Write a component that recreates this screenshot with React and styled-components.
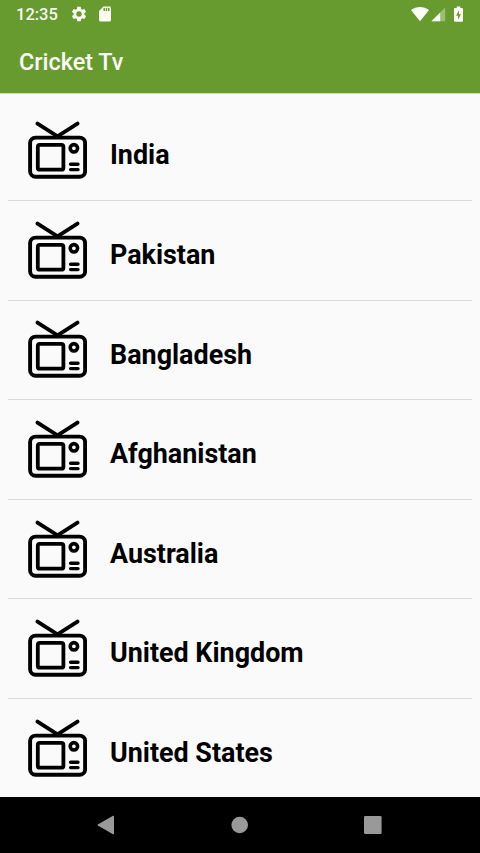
import styled, { createGlobalStyle } from 'styled-components'

const GlobalStyle = createGlobalStyle`
    body {
        margin: 0;
        background: #fafafa;
        font-family: Roboto, "Noto Sans", sans-serif;
    }
    * {
        box-sizing: border-box;
    }
`
const Screen = styled.div`
    display: flex;
    flex-direction: column;
    height: 100vh;
    overflow: hidden;
    background: #fafafa;
`
const Header = styled.header`
    flex: none;
    height: 94px;
    background: #689b2f;
    border-bottom: 1px solid #c9dcb3;
    color: #fff;
`
const StatusBar = styled.div`
    display: flex;
    align-items: center;
    height: 28px;
    padding: 0 17px 0 16px;
`
const Clock = styled.span`
    width: 54px;
    font-size: 16.5px;
    line-height: 28px;
    font-weight: 500;
    padding-top: 1px;
    color: #f6faf0;
`
const StatusIcon = styled.svg`
    flex: none;
    width: ${(props) => props.$width}px;
    height: 18px;
    margin-left: ${(props) => props.$gap || 0}px;
    fill: #fbfdf5;
`
const Spacer = styled.div`
    flex: 1;
`
const Title = styled.h1`
    margin: 0;
    padding: 2px 19px 0;
    font-size: 23.4px;
    font-weight: 500;
    line-height: 65px;
    color: #fbfdf5;
`
const List = styled.ul`
    flex: 1;
    min-height: 0;
    overflow: hidden;
    margin: 0;
    padding: 7.4px 8px 0;
    list-style: none;
`
const Row = styled.li`
    display: flex;
    align-items: center;
    height: 99.6px;
    padding-left: 20px;
    border-bottom: 1px solid #dadada;
`
const TvIcon = styled.svg`
    flex: none;
    width: 59px;
    height: 59px;
    fill: none;
    stroke: #000;
    stroke-linecap: round;
    stroke-linejoin: round;
`
const Country = styled.span`
    margin-left: 23px;
    padding-top: 9.6px;
    font-size: 26.9px;
    line-height: 32px;
    font-weight: 700;
    color: #000;
`
const NavBar = styled.nav`
    flex: none;
    display: flex;
    align-items: center;
    justify-content: space-between;
    height: 56px;
    padding: 0 97px 0 96px;
    background: #000;
`
const NavIcon = styled.svg`
    width: 20px;
    height: 20px;
    fill: #999;
`

const countries = [
    'India',
    'Pakistan',
    'Bangladesh',
    'Afghanistan',
    'Australia',
    'United Kingdom',
    'United States',
]

const Tv = () => (
    <TvIcon viewBox="0 0 59 59">
        <path d="M9.5 2.6 29.5 15.4 49.5 2.6" strokeWidth="3.8" />
        <rect x="2.1" y="16.6" width="55" height="39.2" rx="5.5" strokeWidth="3.9" />
        <rect x="9.8" y="23.9" width="25.6" height="24.8" rx="2" strokeWidth="3.8" />
        <circle cx="45.9" cy="27.3" r="3.7" strokeWidth="3.6" />
        <path d="M42.6 43.3h7.4M42.6 48.6h7.4" strokeWidth="3.4" />
    </TvIcon>
)

const App = () => {
    return (
        <>
            <GlobalStyle />
            <Screen>
                <Header>
                    <StatusBar>
                        <Clock>12:35</Clock>
                        <StatusIcon $width={18} viewBox="0 0 24 24">
                            <path d="M19.14 12.94c.04-.3.06-.61.06-.94s-.02-.64-.07-.94l2.03-1.58a.49.49 0 0 0 .12-.61l-1.92-3.32a.49.49 0 0 0-.59-.22l-2.39.96a7 7 0 0 0-1.62-.94l-.36-2.54a.48.48 0 0 0-.48-.41h-3.84a.48.48 0 0 0-.47.41l-.36 2.54c-.59.24-1.13.57-1.62.94l-2.39-.96a.48.48 0 0 0-.59.22L2.74 8.87a.48.48 0 0 0 .12.61l2.03 1.58c-.05.3-.09.63-.09.94s.02.64.07.94l-2.03 1.58a.49.49 0 0 0-.12.61l1.92 3.32c.12.22.37.29.59.22l2.39-.96c.5.38 1.03.7 1.62.94l.36 2.54c.05.24.24.41.48.41h3.84c.24 0 .44-.17.47-.41l.36-2.54a7 7 0 0 0 1.62-.94l2.39.96c.22.08.47 0 .59-.22l1.92-3.32a.48.48 0 0 0-.12-.61l-2.01-1.58zM12 15.6a3.6 3.6 0 1 1 0-7.2 3.6 3.6 0 0 1 0 7.2z" />
                        </StatusIcon>
                        <StatusIcon $width={18} $gap={8} viewBox="0 0 24 24">
                            <path d="M18 2h-8L4.02 8 4 20c0 1.1.9 2 2 2h12c1.1 0 2-.9 2-2V4c0-1.1-.9-2-2-2zm-6 6h-2V4h2v4zm3 0h-2V4h2v4zm3 0h-2V4h2v4z" />
                        </StatusIcon>
                        <Spacer />
                        <StatusIcon $width={18} viewBox="0 0 18 18">
                            <path d="M0 5C5.2 1 12.8 1 18 5L9 16.200z" />
                        </StatusIcon>
                        <StatusIcon $width={15} $gap={2} viewBox="0 0 15 18">
                            <path d="M14.2 2.500V16.200H.4z" opacity=".35" />
                            <path d="M9.2 7.500V16.200H.4z" />
                        </StatusIcon>
                        <StatusIcon $width={9} $gap={8} viewBox="0 0 9 18">
                            <path
                                fillRule="evenodd"
                                d="M2.7 1.400h3.600V3H8q1 0 1 1V15.700q0 1-1 1H1q-1 0-1-1V4q0-1 1-1h1.700zM5 5.200 2 10.700h2V14.800L7 9.300H5z"
                            />
                        </StatusIcon>
                    </StatusBar>
                    <Title>Cricket Tv</Title>
                </Header>
                <List>
                    {countries.map((country) => (
                        <Row key={country}>
                            <Tv />
                            <Country>{country}</Country>
                        </Row>
                    ))}
                </List>
                <NavBar>
                    <NavIcon viewBox="0 0 20 20">
                        <path d="M17 .8q1-.5 1 .6v17.200q0 1.100-1 .6L1.800 10.600q-.8-.6 0-1.200z" />
                    </NavIcon>
                    <NavIcon viewBox="0 0 20 20">
                        <circle cx="9.7" cy="10" r="8.3" />
                    </NavIcon>
                    <NavIcon viewBox="0 0 20 20">
                        <rect x="1" y="1" width="17.6" height="18" rx="1.2" />
                    </NavIcon>
                </NavBar>
            </Screen>
        </>
    )
}

export default App
